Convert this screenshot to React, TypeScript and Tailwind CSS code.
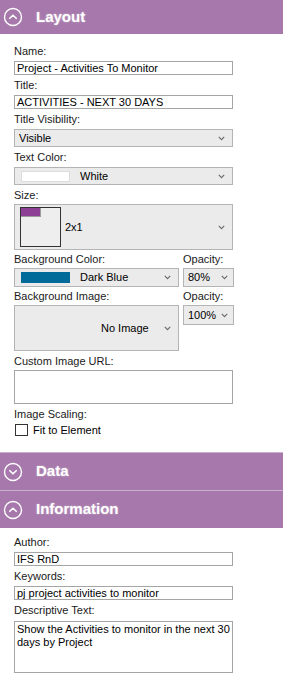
import React from "react";

const font = { fontFamily: '"Liberation Sans", Arial, sans-serif' };

function CircleChevron({ up }: { up: boolean }) {
  return (
    <svg width="20" height="20" viewBox="0 0 20 20" className="shrink-0">
      <circle cx="10" cy="10" r="8.5" fill="none" stroke="white" strokeWidth="1.4" />
      {up ? (
        <path d="M6.8 11.3 L10 8.2 L13.2 11.3" fill="none" stroke="white" strokeWidth="1.6" strokeLinecap="round" strokeLinejoin="round" />
      ) : (
        <path d="M6.8 8.7 L10 11.8 L13.2 8.7" fill="none" stroke="white" strokeWidth="1.6" strokeLinecap="round" strokeLinejoin="round" />
      )}
    </svg>
  );
}

function Header({ title, up, h, top }: { title: string; up: boolean; h: string; top?: boolean }) {
  return (
    <div className={`flex items-center bg-[#a678ab] pl-[3px] ${h} ${top ? "border-t border-[#cbb0ce]" : ""}`}>
      <CircleChevron up={up} />
      <span className="ml-[13px] text-[15px] font-bold text-white [text-shadow:0_0_2px_rgba(255,255,255,0.5)]" style={font}>
        {title}
      </span>
    </div>
  );
}

function Label({ children, mt }: { children: React.ReactNode; mt: string }) {
  return <div className={`${mt} h-[13px] text-[11px] leading-[13px] text-[#1a1a1a]`}>{children}</div>;
}

function Input({ value, mt }: { value: string; mt: string }) {
  return (
    <div className={`${mt} flex h-[14px] w-[219px] items-center border border-[#a5a5a5] bg-white pl-[2px] text-[11px] leading-[12px] text-black`}>
      {value}
    </div>
  );
}

function Chevron() {
  return (
    <svg width="7" height="5" viewBox="0 0 7 5" className="shrink-0">
      <path d="M0.8 0.8 L3.5 3.6 L6.2 0.8" fill="none" stroke="#6a6a6a" strokeWidth="1.1" />
    </svg>
  );
}

export default function App() {
  return (
    <div className="w-[283px] h-[674px] overflow-hidden bg-white" style={font}>
      <Header title="Layout" up h="h-[34px]" />
      <div className="flex flex-col pl-[14px]">
        <Label mt="mt-[11px]">Name:</Label>
        <Input mt="mt-[3px]" value="Project - Activities To Monitor" />
        <Label mt="mt-[4px]">Title:</Label>
        <Input mt="mt-[3px]" value="ACTIVITIES - NEXT 30 DAYS" />
        <Label mt="mt-[4px]">Title Visibility:</Label>
        <div className="mt-[3px] flex h-[18px] w-[219px] items-center justify-between border border-[#b4b4b4] bg-[#ebebeb] pl-[4px] pr-[7px] text-[11px] text-black">
          <span>Visible</span>
          <Chevron />
        </div>
        <Label mt="mt-[4px]">Text Color:</Label>
        <div className="mt-[3px] flex h-[18px] w-[219px] items-center border border-[#b4b4b4] bg-[#ebebeb] pl-[6px] pr-[7px] text-[11px] text-black">
          <div className="h-[11px] w-[49px] border border-[#dcdcdc] bg-white" />
          <span className="ml-[10px] flex-1">White</span>
          <Chevron />
        </div>
        <Label mt="mt-[4px]">Size:</Label>
        <div className="mt-[2px] flex h-[46px] w-[219px] items-center border border-[#b4b4b4] bg-[#ebebeb] pl-[5px] pr-[7px] text-[11px] text-black">
          <div className="h-[40px] w-[41px] border border-[#333] bg-[#eeeeee]">
            <div className="h-[9px] w-[20px] border-r border-b border-[#9a9a9a] bg-[#8c3f94]" />
          </div>
          <span className="ml-[4px] flex-1">2x1</span>
          <Chevron />
        </div>
        <div className="mt-[3px] flex w-[220px] justify-between">
          <div className="flex flex-col">
            <Label mt="mt-0">Background Color:</Label>
            <div className="mt-[2px] flex h-[19px] w-[165px] items-center border border-[#b4b4b4] bg-[#ebebeb] pl-[6px] pr-[7px] text-[11px] text-black">
              <div className="h-[11px] w-[49px] bg-[#006a99]" />
              <span className="ml-[10px] flex-1">Dark Blue</span>
              <Chevron />
            </div>
            <Label mt="mt-[3px]">Background Image:</Label>
            <div className="mt-[2px] flex h-[46px] w-[165px] items-center border border-[#b4b4b4] bg-[#ebebeb] pl-[86px] pr-[7px] text-[11px] text-black">
              <span className="flex-1">No Image</span>
              <Chevron />
            </div>
          </div>
          <div className="flex flex-col">
            <Label mt="mt-0">Opacity:</Label>
            <div className="mt-[2px] flex h-[19px] w-[51px] items-center border border-[#b4b4b4] bg-[#ebebeb] pl-[4px] pr-[5px] text-[11px] text-black">
              <span className="flex-1">80%</span>
              <Chevron />
            </div>
            <Label mt="mt-[3px]">Opacity:</Label>
            <div className="mt-[2px] flex h-[20px] w-[51px] items-center border border-[#b4b4b4] bg-[#ebebeb] pl-[4px] pr-[5px] text-[11px] text-black">
              <span className="flex-1">100%</span>
              <Chevron />
            </div>
          </div>
        </div>
        <Label mt="mt-[4px]">Custom Image URL:</Label>
        <div className="mt-[2px] h-[34px] w-[219px] border border-[#a5a5a5] bg-white" />
        <Label mt="mt-[4px]">Image Scaling:</Label>
        <div className="mt-[2px] flex h-[14px] items-center text-[11px] text-black">
          <div className="ml-[1px] h-[12px] w-[13px] border border-[#333] bg-white" />
          <span className="ml-[5px]">Fit to Element</span>
        </div>
      </div>
      <div className="mt-[15px]">
        <Header title="Data" up={false} h="h-[38px]" top />
        <Header title="Information" up h="h-[38px]" top />
      </div>
      <div className="flex flex-col pl-[14px]">
        <Label mt="mt-[8px]">Author:</Label>
        <Input mt="mt-[3px]" value="IFS RnD" />
        <Label mt="mt-[4px]">Keywords:</Label>
        <Input mt="mt-[3px]" value="pj project activities to monitor" />
        <Label mt="mt-[4px]">Descriptive Text:</Label>
        <div className="mt-[4px] h-[52px] w-[219px] border border-[#a5a5a5] bg-white px-[2px] pt-[1px] text-[11px] leading-[13px] text-black">
          Show the Activities to monitor in the next 30 days by Project
        </div>
      </div>
    </div>
  );
}
